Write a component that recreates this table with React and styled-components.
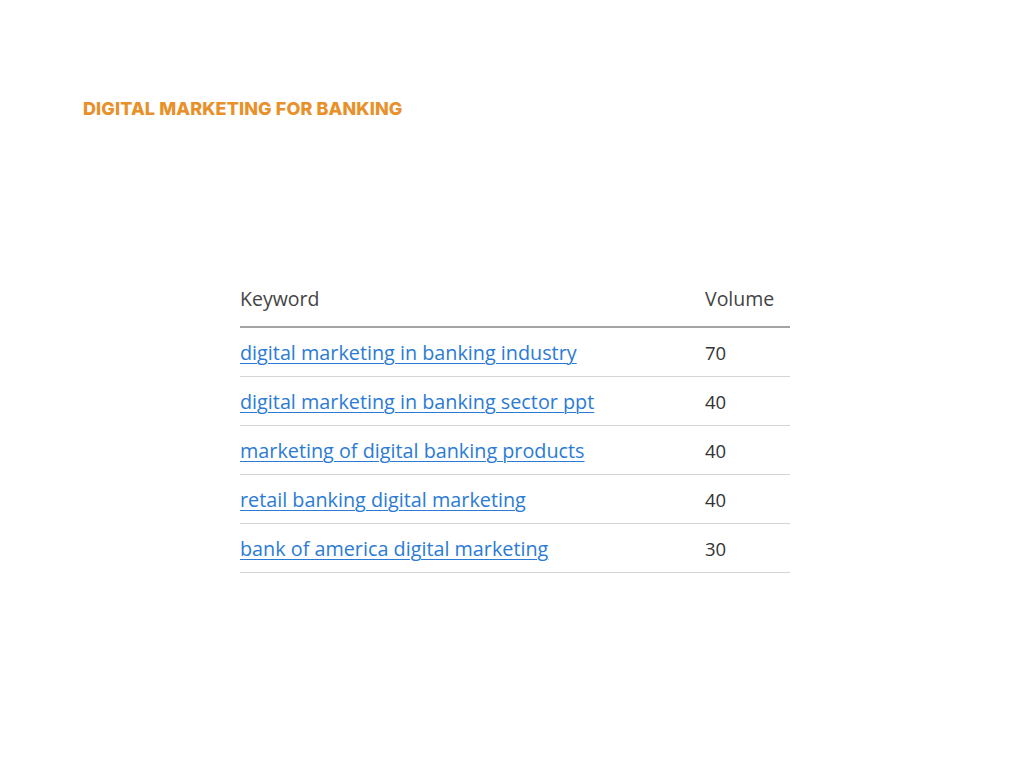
import React from 'react';
import styled, { createGlobalStyle } from 'styled-components';

const rows = [
   { keyword: 'digital marketing in banking industry', volume: 70 },
   { keyword: 'digital marketing in banking sector ppt', volume: 40 },
   { keyword: 'marketing of digital banking products', volume: 40 },
   { keyword: 'retail banking digital marketing', volume: 40 },
   { keyword: 'bank of america digital marketing', volume: 30 },
];

const App = () => (
   <Page>
      <GlobalStyle />
      <Title>DIGITAL MARKETING FOR BANKING</Title>
      <Table>
         <thead>
            <tr>
               <HeadCell>Keyword</HeadCell>
               <HeadCell>Volume</HeadCell>
            </tr>
         </thead>
         <tbody>
            {rows.map((row) => (
               <tr key={row.keyword}>
                  <Cell><Link href="#">{row.keyword}</Link></Cell>
                  <Cell numeric>{row.volume}</Cell>
               </tr>
            ))}
         </tbody>
      </Table>
   </Page>
);

const GlobalStyle = createGlobalStyle`
   body {
      margin: 0;
      background: #fff;
   }
`
const Page = styled.div`
   width: 1024px;
   height: 768px;
   box-sizing: border-box;
   padding: 98px 0 0 83px;
`
const Title = styled.h1`
   margin: 0;
   font-family: Inter, "Noto Sans", sans-serif;
   font-weight: 800;
   font-size: 18px;
   line-height: 22px;
   letter-spacing: 0.1px;
   color: #e8912b;
`
const Table = styled.table`
   margin: 155px 0 0 157px;
   width: 550px;
   border-collapse: collapse;
   font-family: "Open Sans", "Noto Sans", sans-serif;
`
const HeadCell = styled.th`
   text-align: left;
   font-weight: 400;
   font-size: 19.5px;
   color: #444;
   height: 47px;
   padding: 0 0 4px;
   vertical-align: middle;
   border-bottom: 2px solid #a3a3a3;
   &:last-child { width: 85px; }
`
const Cell = styled.td`
   padding: 0;
   height: 48px;
   vertical-align: middle;
   border-bottom: 1px solid #d4d4d4;
   font-size: ${(p) => (p.numeric ? '18.5px' : '19.8px')};
   color: #333;
`
const Link = styled.a`
   color: #2b7bd4;
   text-decoration: underline;
   text-underline-offset: 3px;
   text-decoration-thickness: 1px;
`

export default App;
